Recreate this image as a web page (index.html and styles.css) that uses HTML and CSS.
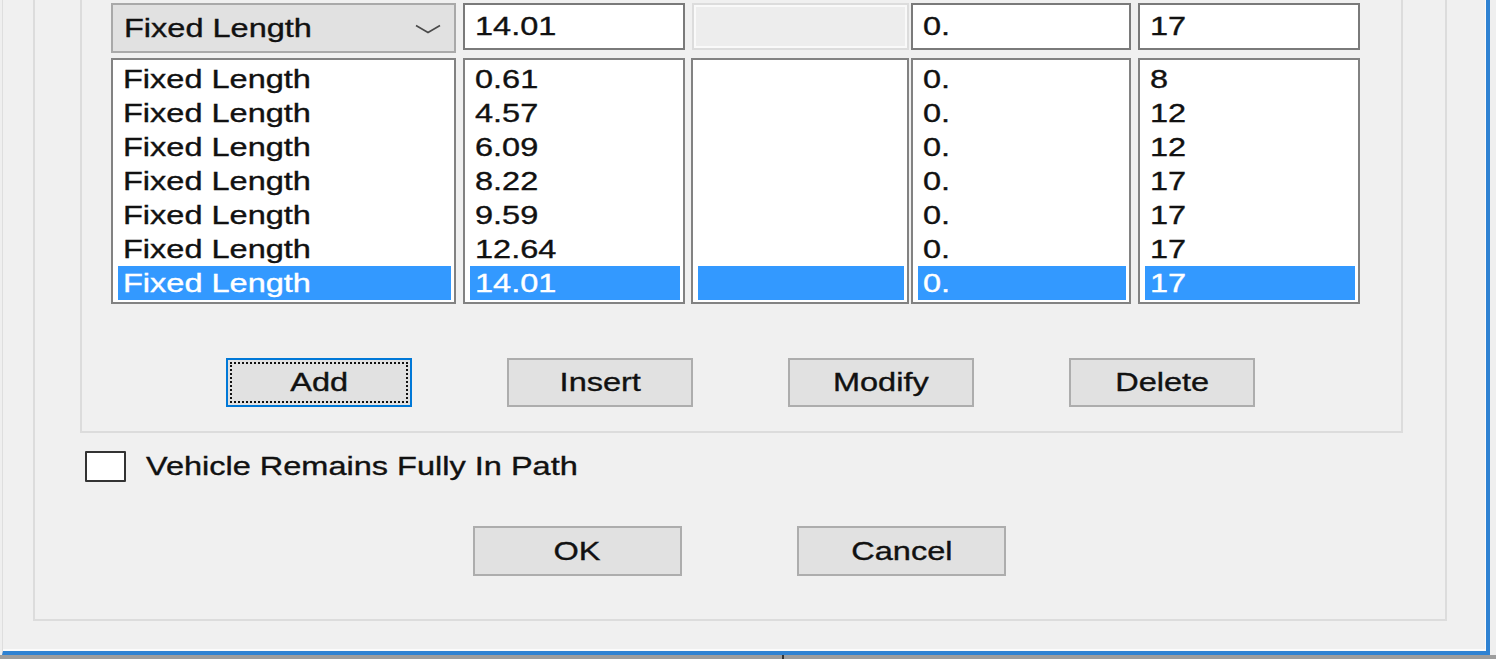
FILE: index.html
```html
<!DOCTYPE html>
<html lang="en">
  <head>
    <meta charset="UTF-8" />
    <meta name="viewport" content="width=device-width, initial-scale=1.0" />
    <title>Path Widths</title>
    <link rel="stylesheet" href="styles.css">
  </head>
  <body>
    <div class="window">
      <div class="outer-group">
        <!-- width table -->
        <div class="inner-group">
          <div class="fields">
            <div class="combo c1">
              <span class="t">Fixed Length</span>
              <svg class="chevron" width="26" height="10" viewBox="0 0 26 10">
                <polyline points="1,1.5 13,8.5 25,1.5" fill="none" stroke="#4a4a4a" stroke-width="1.6" />
              </svg>
            </div>
            <div class="field c2"><span class="t">14.01</span></div>
            <div class="field disabled c3"></div>
            <div class="field c4"><span class="t">0.</span></div>
            <div class="field c5"><span class="t">17</span></div>
          </div>

          <div class="lists">
            <div class="list c1">
              <div class="row"><span class="t">Fixed Length</span></div>
              <div class="row"><span class="t">Fixed Length</span></div>
              <div class="row"><span class="t">Fixed Length</span></div>
              <div class="row"><span class="t">Fixed Length</span></div>
              <div class="row"><span class="t">Fixed Length</span></div>
              <div class="row"><span class="t">Fixed Length</span></div>
              <div class="row sel"><span class="t">Fixed Length</span></div>
            </div>
            <div class="list c2">
              <div class="row"><span class="t">0.61</span></div>
              <div class="row"><span class="t">4.57</span></div>
              <div class="row"><span class="t">6.09</span></div>
              <div class="row"><span class="t">8.22</span></div>
              <div class="row"><span class="t">9.59</span></div>
              <div class="row"><span class="t">12.64</span></div>
              <div class="row sel"><span class="t">14.01</span></div>
            </div>
            <div class="list c3">
              <div class="row"></div>
              <div class="row"></div>
              <div class="row"></div>
              <div class="row"></div>
              <div class="row"></div>
              <div class="row"></div>
              <div class="row sel"></div>
            </div>
            <div class="list c4">
              <div class="row"><span class="t">0.</span></div>
              <div class="row"><span class="t">0.</span></div>
              <div class="row"><span class="t">0.</span></div>
              <div class="row"><span class="t">0.</span></div>
              <div class="row"><span class="t">0.</span></div>
              <div class="row"><span class="t">0.</span></div>
              <div class="row sel"><span class="t">0.</span></div>
            </div>
            <div class="list c5">
              <div class="row"><span class="t">8</span></div>
              <div class="row"><span class="t">12</span></div>
              <div class="row"><span class="t">12</span></div>
              <div class="row"><span class="t">17</span></div>
              <div class="row"><span class="t">17</span></div>
              <div class="row"><span class="t">17</span></div>
              <div class="row sel"><span class="t">17</span></div>
            </div>
          </div>

          <div class="table-buttons">
            <div class="btn focused"><span class="t">Add</span></div>
            <div class="btn"><span class="t">Insert</span></div>
            <div class="btn"><span class="t">Modify</span></div>
            <div class="btn"><span class="t">Delete</span></div>
          </div>
        </div>

        <div class="check-row">
          <div class="check-box"></div>
          <span class="t">Vehicle Remains Fully In Path</span>
        </div>

        <div class="dialog-buttons">
          <div class="btn"><span class="t">OK</span></div>
          <div class="btn"><span class="t">Cancel</span></div>
        </div>
      </div>
    </div>
    <div class="ground"><div class="tick"></div></div>
  </body>
</html>
```

FILE: styles.css
```css
body {
  margin: 0;
  background: #efefef;
  font-family: "Liberation Sans", Arial, sans-serif;
  font-size: 25px;
  color: #111;
  overflow: hidden;
}

/* the screenshot is stretched sideways, so the text is too */
.t {
  display: inline-block;
  transform: scaleX(1.3);
  transform-origin: 0 50%;
  white-space: nowrap;
  -webkit-text-stroke: 0.35px currentColor;
}

.window {
  box-sizing: border-box;
  margin-left: 2px;
  width: 1488px;
  height: 655px;
  padding-left: 30px;
  background: #f0f0f0;
  border-left: 1px solid #dedede;
  border-right: 4px solid #2f82d2;
  border-bottom: 4px solid #2f82d2;
  box-shadow: inset -1px -2px 0 #fbfbfb;
  overflow: hidden;
}

.outer-group {
  box-sizing: border-box;
  width: 1414px;
  margin-top: -40px;
  padding: 18px 42px 43px 45px;
  border: 2px solid #dcdcdc;
}

.inner-group {
  padding: 21px 0 24px 29px;
  border: 2px solid #dcdcdc;
}

.fields {
  display: flex;
  align-items: flex-start;
  height: 55px;
}

.lists {
  display: flex;
}

.c1 {
  width: 345px;
}

.c2 {
  width: 222px;
  margin-left: 7px;
}

.c3 {
  width: 218px;
  margin-left: 6px;
}

.c4 {
  width: 220px;
  margin-left: 2px;
}

.c5 {
  width: 222px;
  margin-left: 7px;
}

.combo,
.field {
  box-sizing: border-box;
  display: flex;
  align-items: center;
}

.combo {
  height: 50px;
  padding: 0 13px 0 11px;
  justify-content: space-between;
  background: #e1e1e1;
  border: 2px solid #a9a9a9;
}

.chevron {
  margin-top: 1px;
}

.field {
  height: 47px;
  padding-left: 10px;
  background: #fff;
  border: 2px solid #7a7a7a;
}

.field.disabled {
  margin-left: 7px;
  width: 217px;
  background: #ededed;
  border-color: #dcdcdc;
  box-shadow: inset 0 0 0 2px #f9f9f9;
}

.list {
  box-sizing: border-box;
  padding: 2px 3px 2px 5px;
  background: #fff;
  border: 2px solid #828282;
}

.row {
  height: 34px;
  line-height: 34px;
  padding-left: 5px;
}

.row.sel {
  background: #3399ff;
  color: #fff;
}

.table-buttons {
  display: flex;
  gap: 95px;
  margin: 54px 0 0 115px;
}

.btn {
  box-sizing: border-box;
  width: 186px;
  height: 49px;
  display: flex;
  align-items: center;
  justify-content: center;
  background: #e1e1e1;
  border: 2px solid #adadad;
}

.btn .t {
  transform-origin: 50% 50%;
}

.btn.focused {
  border-color: #0078d7;
  outline: 2px dotted #111;
  outline-offset: -6px;
}

.check-row {
  display: flex;
  align-items: center;
  gap: 20px;
  margin: 18px 0 0 5px;
}

.check-box {
  box-sizing: border-box;
  width: 41px;
  height: 31px;
  background: #fff;
  border: 2px solid #333;
  border-radius: 1px;
}

.dialog-buttons {
  display: flex;
  justify-content: center;
  gap: 115px;
  margin-top: 44px;
  padding-right: 4px;
}

.dialog-buttons .btn {
  width: 209px;
  height: 50px;
}

.ground {
  height: 4px;
  background: #9d9d9d;
}

.tick {
  margin-left: 782px;
  width: 2px;
  height: 4px;
  background: #333;
}
```
